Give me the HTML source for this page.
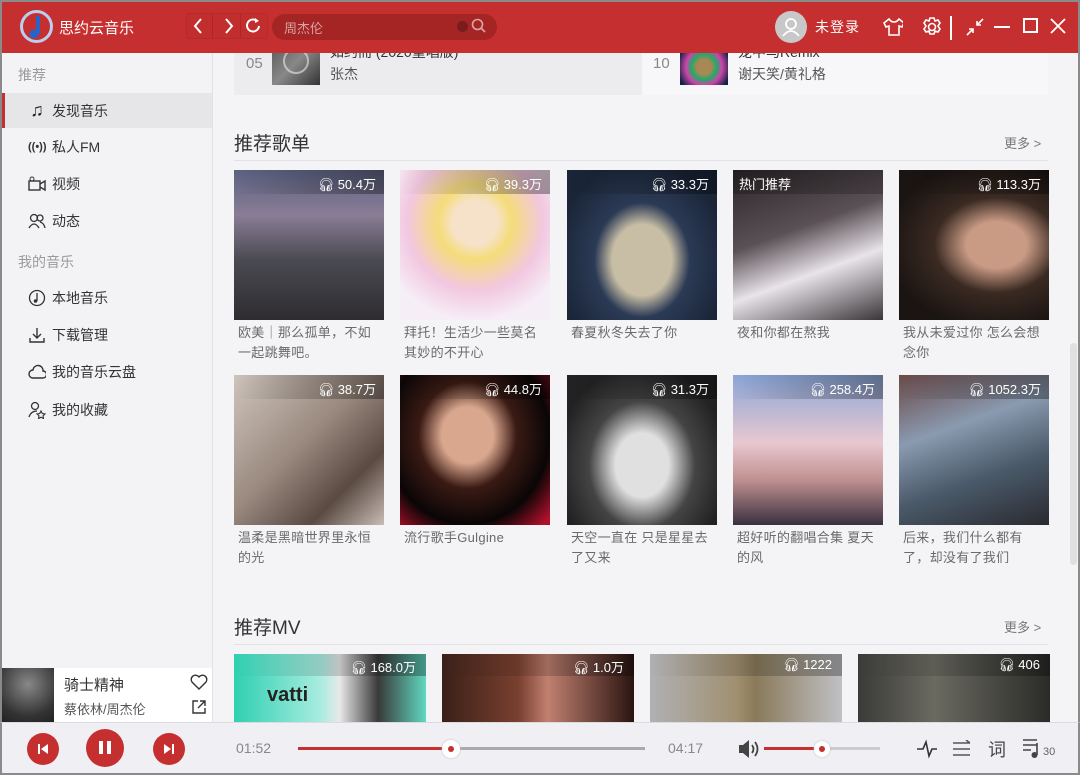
<!DOCTYPE html>
<html><head><meta charset="utf-8">
<style>
*{margin:0;padding:0;box-sizing:border-box}
body{width:1080px;height:775px;overflow:hidden;background:#f4f4f6;font-family:"Liberation Sans","Noto Sans CJK SC",sans-serif;position:relative;color:#333}
.abs{position:absolute}
#top{left:0;top:0;width:1080px;height:53px;background:#c62f2f;z-index:5;border-top:2px solid #8a8a8a;border-left:2px solid #8a8a8a;border-right:2px solid #8a8a8a}
#side{left:0;top:53px;width:213px;height:669px;background:#f3f3f6;border-right:1px solid #e2e2e4;border-left:2px solid #8a8a8a}
.si{position:absolute;left:26px;font-size:14px;color:#333;display:flex;align-items:center;gap:6px}
.si>:first-child{width:18px;text-align:center}
.sh{position:absolute;left:16px;font-size:14px;color:#9a9a9a}
.card{position:absolute;width:150px}
.card .img{width:150px;height:150px;position:relative;overflow:hidden}
.card .cnt{position:absolute;right:0;top:0;height:24px;width:100%;background:linear-gradient(90deg,rgba(0,0,0,0),rgba(0,0,0,.35));color:#fff;font-size:13px;text-align:right;padding:4px 8px 0 0}
.card .cap{font-size:13px;color:#6a6a6a;line-height:20px;margin-top:3px;padding-left:4px;letter-spacing:.3px}
.mv{position:absolute;top:654px;width:192px;height:68px;overflow:hidden}
.mv .cnt{position:absolute;left:0;top:0;width:100%;height:22px;background:linear-gradient(90deg,rgba(0,0,0,0),rgba(0,0,0,.3));color:#fff;font-size:13px;text-align:right;padding:3px 10px 0 0}
h2{position:absolute;font-size:19px;font-weight:normal;color:#333}
.more{position:absolute;font-size:13px;color:#777}
.hl{position:absolute;left:234px;width:814px;height:1px;background:#e3e3e5}
#bot{left:0;top:722px;width:1080px;height:53px;background:#f0f0f4;border-top:1px solid #dcdce0;border-left:2px solid #8a8a8a;border-right:2px solid #8a8a8a;border-bottom:2px solid #8a8a8a}
.rb{position:absolute;border-radius:50%;background:#c62f2f}
</style></head><body>

<div class="abs" style="left:234px;top:40px;width:408px;height:55px;background:#ececee"></div>
<div class="abs" style="left:642px;top:40px;width:406px;height:55px;background:#f7f7f9"></div>
<div class="abs" style="left:246px;top:55px;font-size:15px;color:#888">05</div>
<div class="abs" style="left:272px;top:40px;width:48px;height:45px;background:linear-gradient(135deg,#555,#888 50%,#333)"></div>
<div class="abs" style="left:283px;top:48px;width:26px;height:26px;border:2px solid rgba(255,255,255,.5);border-radius:50%"></div>
<div class="abs" style="left:330px;top:42px;font-size:14px;color:#333">如约而 (2020重唱版)</div>
<div class="abs" style="left:330px;top:64px;font-size:14px;color:#555">张杰</div>
<div class="abs" style="left:653px;top:55px;font-size:15px;color:#888">10</div>
<div class="abs" style="left:680px;top:40px;width:48px;height:45px;background:radial-gradient(circle at 50% 60%,#a85 0 20%,#2a6 35%,#c4a 50%,#124 75%)"></div>
<div class="abs" style="left:738px;top:42px;font-size:14px;color:#333">宠中马Remix</div>
<div class="abs" style="left:738px;top:64px;font-size:14px;color:#555">谢天笑/黄礼格</div>

<div id="top" class="abs">
 <div class="abs" style="left:18px;top:8px;width:33px;height:33px;border-radius:50%;background:#c62f2f;border:3px solid #b8cff0"></div>
 <svg class="abs" style="left:20px;top:8px" width="30" height="33" viewBox="0 0 30 33"><path d="M16 6v18" stroke="#2a63c8" stroke-width="4"/><circle cx="12" cy="24" r="4.5" fill="#2a63c8"/></svg>
 <div class="abs" style="left:57px;top:15px;font-size:15px;color:#fff">思约云音乐</div>
 <div class="abs" style="left:184px;top:11px;width:82px;height:26px;border:1px solid #b52a2a;border-radius:3px;background:#c22d2d"></div>
 <div class="abs" style="left:210px;top:12px;width:1px;height:24px;background:#b02626"></div>
 <div class="abs" style="left:238px;top:12px;width:1px;height:24px;background:#b02626"></div>
 <svg class="abs" style="left:190px;top:14px" width="76" height="20"><path d="M9 3l-6 7 6 7" stroke="#fff" stroke-width="2" fill="none"/><path d="M34 3l6 7-6 7" stroke="#fff" stroke-width="2" fill="none"/><path d="M65 5a6 6 0 1 0 2 5" stroke="#fff" stroke-width="2" fill="none"/><path d="M63 2l4 3-4 2" fill="#fff"/></svg>
 <div class="abs" style="left:270px;top:12px;width:225px;height:26px;border-radius:13px;background:#a52525"></div>
 <div class="abs" style="left:282px;top:16px;font-size:13px;color:#d8a3a3">周杰伦</div>
 <div class="abs" style="left:455px;top:19px;width:11px;height:11px;border-radius:50%;background:#7a1c1c"></div>
 <svg class="abs" style="left:469px;top:16px" width="16" height="16"><circle cx="6.5" cy="6.5" r="5" stroke="#dca5a5" stroke-width="1.6" fill="none"/><path d="M10 10l4 4" stroke="#dca5a5" stroke-width="1.6"/></svg>
 <div class="abs" style="left:773px;top:9px;width:32px;height:32px;border-radius:50%;background:#c8c8c8"></div>
 <svg class="abs" style="left:773px;top:9px" width="32" height="32"><circle cx="16" cy="13" r="5" stroke="#fff" stroke-width="1.8" fill="none"/><path d="M8 25q8-10 16 0" stroke="#fff" stroke-width="1.8" fill="none"/></svg>
 <div class="abs" style="left:813px;top:15px;font-size:14px;color:#fff;letter-spacing:1px">未登录</div>
 <svg class="abs" style="left:881px;top:15px" width="20" height="20"><path d="M6 2l-5 4 2 4 3-1v9h10V9l3 1 2-4-5-4q-2 3-5 3t-5-3z" stroke="#fff" stroke-width="1.6" fill="none"/></svg>
 <svg class="abs" style="left:919px;top:14px" width="22" height="22"><circle cx="11" cy="11" r="3.5" stroke="#fff" stroke-width="1.6" fill="none"/><path d="M9 2h4l1 3 3-1 2 3-2 3 2 3-2 3-3-1-1 3H9l-1-3-3 1-2-3 2-3-2-3 2-3 3 1z" stroke="#fff" stroke-width="1.6" fill="none"/></svg>
 <div class="abs" style="left:948px;top:14px;width:2px;height:24px;background:#fff"></div>
 <svg class="abs" style="left:963px;top:15px" width="20" height="20"><path d="M2 18l6-6M4 12h4v4M18 2l-6 6M16 8h-4V4" stroke="#fff" stroke-width="1.6" fill="none"/></svg>
 <div class="abs" style="left:992px;top:24px;width:16px;height:2px;background:#fff"></div>
 <div class="abs" style="left:1021px;top:16px;width:15px;height:15px;border:2px solid #fff"></div>
 <svg class="abs" style="left:1047px;top:15px" width="18" height="18"><path d="M2 2l14 14M16 2L2 16" stroke="#fff" stroke-width="1.8"/></svg>
</div>

<div id="side" class="abs">
 <div class="sh" style="top:12px">推荐</div>
 <div class="abs" style="left:0;top:40px;width:210px;height:35px;background:#e6e6e8;border-left:3px solid #c62f2f"></div>
 <div class="si" style="top:47px"><span style="font-size:18px;color:#222;font-weight:bold">♫</span>发现音乐</div>
 <div class="si" style="top:84px"><span style="font-size:11px;font-weight:bold">((•))</span>私人FM</div>
 <div class="si" style="top:121px"><svg width="18" height="16"><rect x="1" y="5" width="11" height="9" stroke="#333" fill="none" stroke-width="1.4"/><path d="M12 8l5-3v9l-5-3" stroke="#333" fill="none" stroke-width="1.4"/><circle cx="4" cy="3" r="2" stroke="#333" fill="none"/></svg>视频</div>
 <div class="si" style="top:158px"><svg width="18" height="16"><circle cx="6" cy="5" r="3.5" stroke="#333" fill="none" stroke-width="1.3"/><path d="M1 15q5-8 10 0" stroke="#333" fill="none" stroke-width="1.3"/><circle cx="12" cy="5" r="3" stroke="#333" fill="none" stroke-width="1.3"/><path d="M12 9q4 1 5 6" stroke="#333" fill="none" stroke-width="1.3"/></svg>动态</div>
 <div class="sh" style="top:199px">我的音乐</div>
 <div class="si" style="top:235px"><svg width="18" height="18"><circle cx="9" cy="9" r="7.5" stroke="#333" fill="none" stroke-width="1.3"/><path d="M9 4v8" stroke="#333" stroke-width="1.3"/><circle cx="7.5" cy="12" r="1.8" fill="#333"/></svg>本地音乐</div>
 <div class="si" style="top:272px"><svg width="18" height="18"><path d="M9 2v10M5 8l4 4 4-4M2 12v4h14v-4" stroke="#333" fill="none" stroke-width="1.4"/></svg>下载管理</div>
 <div class="si" style="top:309px"><svg width="18" height="16"><path d="M5 14a4 4 0 0 1 0-8 5 5 0 0 1 10 1 3.3 3.3 0 0 1 0 7z" stroke="#333" fill="none" stroke-width="1.4"/></svg>我的音乐云盘</div>
 <div class="si" style="top:347px"><svg width="18" height="18"><circle cx="7" cy="5" r="3.5" stroke="#333" fill="none" stroke-width="1.3"/><path d="M1 16q2-6 8-6" stroke="#333" fill="none" stroke-width="1.3"/><path d="M13 10l1.3 2.5 2.7.4-2 1.9.5 2.7-2.5-1.3-2.5 1.3.5-2.7-2-1.9 2.7-.4z" stroke="#333" fill="none" stroke-width="1.1"/></svg>我的收藏</div>
 <div class="abs" style="left:0;top:615px;width:210px;height:54px;background:#fff"></div>
 <div class="abs" style="left:0;top:615px;width:52px;height:54px;background:radial-gradient(circle at 50% 30%,#888,#333 70%,#222)"></div>
 <div class="abs" style="left:62px;top:621px;font-size:15px;color:#333">骑士精神</div>
 <div class="abs" style="left:62px;top:646px;font-size:13px;color:#555">蔡依林/周杰伦</div>
 <svg class="abs" style="left:188px;top:621px" width="18" height="16"><path d="M9 15L2 8a4 4 0 0 1 7-5 4 4 0 0 1 7 5z" stroke="#333" fill="none" stroke-width="1.4"/></svg>
 <svg class="abs" style="left:189px;top:646px" width="16" height="16"><path d="M7 2H2v12h12V9M9 2h5v5M14 2L7 9" stroke="#333" fill="none" stroke-width="1.4"/></svg>
</div>

<h2 style="left:234px;top:129px">推荐歌单</h2>
<div class="more" style="left:1004px;top:133px">更多 &gt;</div>
<div class="hl" style="top:160px"></div>

<div class="card" style="left:234px;top:170px"><div class="img" style="background:linear-gradient(180deg,#5c6282 0%,#8a7d96 30%,#4a4a52 60%,#2e2c30 100%)"><div class="cnt">🎧︎ 50.4万</div></div><div class="cap">欧美｜那么孤单，不如一起跳舞吧。</div></div>
<div class="card" style="left:400px;top:170px"><div class="img" style="background:radial-gradient(circle at 50% 35%,#f6e2c8 0 18%,#f5dc7a 30%,#f2c7e0 55%,#f6eef6 80%)"><div class="cnt">🎧︎ 39.3万</div></div><div class="cap">拜托！生活少一些莫名其妙的不开心</div></div>
<div class="card" style="left:567px;top:170px"><div class="img" style="background:radial-gradient(ellipse at 50% 60%,#c8bea5 0 28%,#2b3a55 45%,#1a2538 80%)"><div class="cnt">🎧︎ 33.3万</div></div><div class="cap">春夏秋冬失去了你</div></div>
<div class="card" style="left:733px;top:170px"><div class="img" style="background:linear-gradient(160deg,#2a2528 0%,#5a5055 40%,#e8e4ea 65%,#3a3538 100%)"><div class="cnt" style="text-align:left;padding-left:6px;background:rgba(0,0,0,.2)">热门推荐</div></div><div class="cap">夜和你都在熬我</div></div>
<div class="card" style="left:899px;top:170px"><div class="img" style="background:radial-gradient(ellipse at 65% 50%,#c99a84 0 22%,#3a2a22 45%,#1a1412 80%)"><div class="cnt">🎧︎ 113.3万</div></div><div class="cap">我从未爱过你 怎么会想念你</div></div>

<div class="card" style="left:234px;top:375px"><div class="img" style="background:linear-gradient(135deg,#cfc5bc 0%,#9a8a80 45%,#5a4a42 75%,#c8bcb4 100%)"><div class="cnt">🎧︎ 38.7万</div></div><div class="cap">温柔是黑暗世界里永恒的光</div></div>
<div class="card" style="left:400px;top:375px"><div class="img" style="background:radial-gradient(ellipse at 45% 40%,#d9a78e 0 22%,#3a1a14 42%,#0a0606 70%,#b0102a 95%)"><div class="cnt">🎧︎ 44.8万</div></div><div class="cap">流行歌手Gulgine</div></div>
<div class="card" style="left:567px;top:375px"><div class="img" style="background:radial-gradient(ellipse at 50% 60%,#e0e0e0 0 25%,#444 50%,#222 80%)"><div class="cnt">🎧︎ 31.3万</div></div><div class="cap">天空一直在 只是星星去了又来</div></div>
<div class="card" style="left:733px;top:375px"><div class="img" style="background:linear-gradient(180deg,#8aa6d8 0%,#e8c8d0 45%,#c09090 70%,#3a3040 100%)"><div class="cnt">🎧︎ 258.4万</div></div><div class="cap">超好听的翻唱合集 夏天的风</div></div>
<div class="card" style="left:899px;top:375px"><div class="img" style="background:linear-gradient(160deg,#6a4a48 0%,#8a9ab0 35%,#4a5a6a 65%,#2a2a30 100%)"><div class="cnt">🎧︎ 1052.3万</div></div><div class="cap">后来，我们什么都有了，却没有了我们</div></div>

<h2 style="left:234px;top:613px">推荐MV</h2>
<div class="more" style="left:1004px;top:617px">更多 &gt;</div>
<div class="hl" style="top:644px"></div>

<div class="mv" style="left:234px;background:linear-gradient(90deg,#2ed0b0 0%,#a8ece0 45%,#e8e8e8 55%,#3a3a3a 75%,#60d8c0 100%)"><div class="cnt">🎧︎ 168.0万</div><div class="abs" style="left:33px;top:30px;font-size:20px;font-weight:bold;color:#222">vatti</div></div>
<div class="mv" style="left:442px;background:linear-gradient(90deg,#3a2018 0%,#7a4030 40%,#c08070 55%,#2a1410 100%)"><div class="cnt">🎧︎ 1.0万</div></div>
<div class="mv" style="left:650px;background:linear-gradient(90deg,#b0b0b4 0%,#a09070 45%,#8a7a5a 55%,#c0c0c4 100%)"><div class="cnt">🎧︎ 1222</div></div>
<div class="mv" style="left:858px;background:linear-gradient(90deg,#3a3a38 0%,#6a6a60 40%,#4a4a44 70%,#2a2a28 100%)"><div class="cnt">🎧︎ 406</div></div>

<div class="abs" style="left:1070px;top:343px;width:7px;height:222px;background:#e0e0e2;border-radius:4px"></div>
<div class="abs" style="left:1078px;top:0;width:2px;height:775px;background:#8a8a8a"></div>

<div id="bot" class="abs">
 <div class="rb" style="left:25px;top:10px;width:32px;height:32px"></div>
 <svg class="abs" style="left:35px;top:20px" width="12" height="12"><rect x="1" y="1" width="2" height="10" fill="#fff"/><path d="M11 1v10L4 6z" fill="#fff"/></svg>
 <div class="rb" style="left:84px;top:6px;width:38px;height:38px"></div>
 <div class="abs" style="left:97px;top:18px;width:4px;height:13px;background:#fff"></div>
 <div class="abs" style="left:105px;top:18px;width:4px;height:13px;background:#fff"></div>
 <div class="rb" style="left:151px;top:10px;width:32px;height:32px"></div>
 <svg class="abs" style="left:161px;top:20px" width="12" height="12"><path d="M1 1v10l7-5z" fill="#fff"/><rect x="9" y="1" width="2" height="10" fill="#fff"/></svg>
 <div class="abs" style="left:234px;top:17px;font-size:14px;color:#888">01:52</div>
 <div class="abs" style="left:296px;top:24px;width:347px;height:3px;background:#aaa"></div>
 <div class="abs" style="left:296px;top:24px;width:154px;height:3px;background:#c62f2f"></div>
 <div class="abs" style="left:440px;top:17px;width:18px;height:18px;border-radius:50%;background:#fff;box-shadow:0 0 2px #bbb"></div>
 <div class="abs" style="left:446px;top:23px;width:6px;height:6px;border-radius:50%;background:#c62f2f"></div>
 <div class="abs" style="left:666px;top:17px;font-size:14px;color:#888">04:17</div>
 <svg class="abs" style="left:736px;top:16px" width="22" height="20"><path d="M1 6h4l6-5v18l-6-5H1z" fill="#444"/><path d="M14 6q3 4 0 8M17 3q5 7 0 14" stroke="#444" stroke-width="1.8" fill="none"/></svg>
 <div class="abs" style="left:762px;top:24px;width:116px;height:3px;background:#ccc"></div>
 <div class="abs" style="left:762px;top:24px;width:58px;height:3px;background:#c62f2f"></div>
 <div class="abs" style="left:812px;top:18px;width:16px;height:16px;border-radius:50%;background:#fff;box-shadow:0 0 2px #bbb"></div>
 <div class="abs" style="left:817px;top:23px;width:6px;height:6px;border-radius:50%;background:#c62f2f"></div>
 <svg class="abs" style="left:914px;top:15px" width="22" height="22"><path d="M1 11h6l3-7 3 14 3-7h5" stroke="#333" stroke-width="1.6" fill="none"/></svg>
 <svg class="abs" style="left:950px;top:17px" width="20" height="18"><path d="M1 3h17M1 9h17M1 15h17M14 0l4 3" stroke="#555" stroke-width="1.5" fill="none"/></svg>
 <div class="abs" style="left:986px;top:13px;font-size:18px;color:#444">词</div>
 <svg class="abs" style="left:1020px;top:14px" width="22" height="22"><path d="M1 3h14M1 8h14M1 13h8" stroke="#444" stroke-width="1.6"/><path d="M15 6v12" stroke="#444" stroke-width="1.6"/><circle cx="12.5" cy="18" r="3" fill="#444"/></svg>
 <div class="abs" style="left:1041px;top:23px;font-size:11px;color:#666">30</div>
</div>
</body></html>
